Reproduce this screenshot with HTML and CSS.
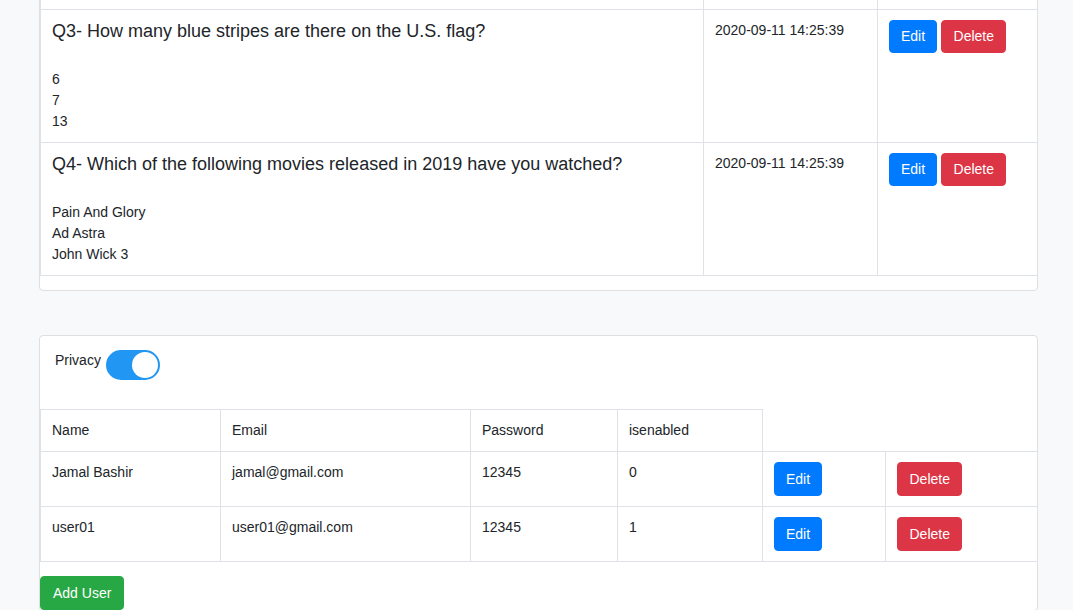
FILE: index.html
```html
<!DOCTYPE html>
<html lang="en">
<head>
<meta charset="utf-8">
<title>Questions and Users</title>
<link rel="stylesheet" href="styles.css">
</head>
<body>
<div class="page">
  <div class="card card-questions">
    <table class="grid">
      <colgroup>
        <col class="q-col-question">
        <col class="q-col-date">
        <col class="q-col-actions">
      </colgroup>
      <tr class="spacer-row">
        <td></td><td></td><td></td>
      </tr>
      <tr>
        <td>
          <h5 class="question">Q3- How many blue stripes are there on the U.S. flag?</h5>
          <div class="options">6<br>7<br>13</div>
        </td>
        <td>2020-09-11 14:25:39</td>
        <td><button class="btn btn-blue btn-q">Edit</button> <button class="btn btn-red btn-q">Delete</button></td>
      </tr>
      <tr>
        <td>
          <h5 class="question">Q4- Which of the following movies released in 2019 have you watched?</h5>
          <div class="options">Pain And Glory<br>Ad Astra<br>John Wick 3</div>
        </td>
        <td>2020-09-11 14:25:39</td>
        <td><button class="btn btn-blue btn-q">Edit</button> <button class="btn btn-red btn-q">Delete</button></td>
      </tr>
    </table>
  </div>

  <div class="card card-users">
    <div class="privacy">
      <span class="privacy-label">Privacy</span>
      <span class="switch"><span class="knob"></span></span>
    </div>
    <table class="grid">
      <colgroup>
        <col class="u-col-name">
        <col class="u-col-email">
        <col class="u-col-pass">
        <col class="u-col-enabled">
        <col class="u-col-edit">
        <col class="u-col-delete">
      </colgroup>
      <tr>
        <td>Name</td>
        <td>Email</td>
        <td>Password</td>
        <td>isenabled</td>
      </tr>
      <tr>
        <td>Jamal Bashir</td>
        <td>jamal@gmail.com</td>
        <td>12345</td>
        <td>0</td>
        <td><button class="btn btn-blue">Edit</button></td>
        <td><button class="btn btn-red">Delete</button></td>
      </tr>
      <tr>
        <td>user01</td>
        <td>user01@gmail.com</td>
        <td>12345</td>
        <td>1</td>
        <td><button class="btn btn-blue">Edit</button></td>
        <td><button class="btn btn-red">Delete</button></td>
      </tr>
    </table>
    <div class="add-row">
      <button class="btn btn-green">Add User</button>
    </div>
  </div>
</div>
</body>
</html>
```
FILE: styles.css
```css
html, body {
  margin: 0;
  padding: 0;
}
body {
  background: #f8f9fa;
  font-family: "Liberation Sans", Arial, sans-serif;
  font-size: 14px;
  line-height: 21px;
  color: #212529;
  overflow: hidden;
}
.page {
  padding: 0 35px 40px 39px;
}
.card {
  background: #fff;
  border: 1px solid #dfdfdf;
  border-radius: 4px;
}
.card-questions {
  margin-top: -20px;
  padding-bottom: 14px;
}
.card-users {
  margin-top: 44px;
}
.grid {
  border-collapse: collapse;
  table-layout: fixed;
  width: 997px;
}
.grid td {
  border: 1px solid #dee2e6;
  padding: 10px 11px;
  vertical-align: top;
  text-align: left;
}
.spacer-row td {
  padding: 0;
  height: 27px;
}
.q-col-question { width: 663px; }
.q-col-date { width: 174px; }
.q-col-actions { width: 160px; }
.u-col-name { width: 180px; }
.u-col-email { width: 250px; }
.u-col-pass { width: 147px; }
.u-col-enabled { width: 145px; }
.u-col-edit { width: 123px; }
.u-col-delete { width: 152px; }

.question {
  margin: 0 0 27px;
  font-size: 18px;
  line-height: 22px;
  font-weight: 400;
}
.options {
  line-height: 21px;
}
.btn {
  display: inline-block;
  font-family: "Liberation Sans", Arial, sans-serif;
  font-size: 14px;
  line-height: 20px;
  padding: 6px 11px;
  border: 1px solid transparent;
  border-radius: 4px;
  color: #fff;
  cursor: pointer;
  vertical-align: top;
}
.btn-q {
  padding-top: 5px;
  padding-bottom: 6px;
}
.btn-blue { background: #007bff; border-color: #007bff; }
.btn-red {
  background: #dc3545;
  border-color: #dc3545;
  padding-left: 11.5px;
  padding-right: 11.5px;
}
.btn-green {
  background: #28a745;
  border-color: #28a745;
  padding-left: 12px;
  padding-right: 12px;
}

.privacy {
  display: flex;
  align-items: flex-start;
  gap: 5px;
  padding: 14px 15px 29px;
}
.privacy-label {
  line-height: 21px;
}
.switch {
  position: relative;
  display: block;
  width: 54px;
  height: 30px;
  border-radius: 15px;
  background: #2196f3;
}
.knob {
  position: absolute;
  top: 2px;
  right: 2px;
  width: 26px;
  height: 26px;
  border-radius: 50%;
  background: #fff;
}
.add-row {
  padding-top: 14px;
}
```
